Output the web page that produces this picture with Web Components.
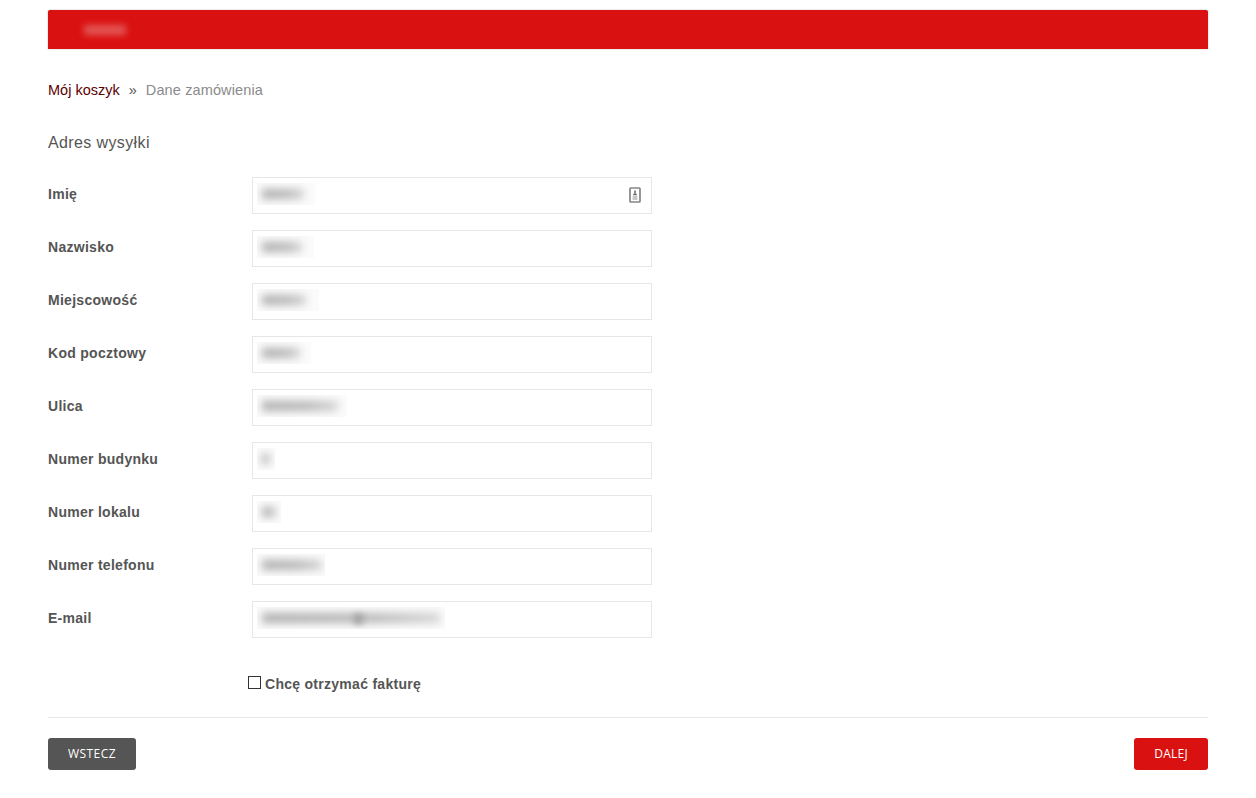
<!DOCTYPE html>
<html lang="pl"><head><meta charset="utf-8"><title>Dane zamówienia</title>
<style>html,body{margin:0;background:#fff}body{font-family:"Liberation Sans",Arial,sans-serif}</style>
</head><body>
<order-page>
  <top-bar slot="bar"></top-bar>
  <bread-crumbs slot="crumbs"></bread-crumbs>
  <section-title slot="title">Adres wysyłki</section-title>
  <form-field slot="fields" label="Imię" w="58" bar="42" icon></form-field>
  <form-field slot="fields" label="Nazwisko" w="57" bar="40"></form-field>
  <form-field slot="fields" label="Miejscowość" w="62" bar="44"></form-field>
  <form-field slot="fields" label="Kod pocztowy" w="54" bar="38"></form-field>
  <form-field slot="fields" label="Ulica" w="90" bar="76"></form-field>
  <form-field slot="fields" label="Numer budynku" w="18" bar="8"></form-field>
  <form-field slot="fields" label="Numer lokalu" w="24" bar="14"></form-field>
  <form-field slot="fields" label="Numer telefonu" w="68" bar="60"></form-field>
  <form-field slot="fields" label="E-mail" w="188" bar="178" at></form-field>
  <invoice-check slot="check">Chcę otrzymać fakturę</invoice-check>
  <action-button slot="back" kind="dark">WSTECZ</action-button>
  <action-button slot="next" kind="red">DALEJ</action-button>
</order-page>
<script>
function def(name, css, html, init){
  customElements.define(name, class extends HTMLElement{
    constructor(){super();const r=this.attachShadow({mode:'open'});r.innerHTML='<style>'+css+'</style>'+html;}
    connectedCallback(){if(init)init(this,this.shadowRoot);}
  });
}
def('order-page',`
:host{display:block;padding:10px 48px 0;box-sizing:border-box;height:798px;overflow:hidden}
.crumbs{margin-top:32px}
.title{margin-top:34px}
.fields{display:flex;flex-direction:column;gap:16px;margin-top:24px}
.check{margin-top:37px;padding-left:200px}
hr{border:0;border-top:1px solid #e6e6e6;margin:24px 0 20px}
.actions{display:flex;justify-content:space-between}
`,`
<slot name="bar"></slot>
<div class="crumbs"><slot name="crumbs"></slot></div>
<div class="title"><slot name="title"></slot></div>
<div class="fields"><slot name="fields"></slot></div>
<div class="check"><slot name="check"></slot></div>
<hr>
<div class="actions"><slot name="back"></slot><slot name="next"></slot></div>
`);
def('top-bar',`
:host{display:flex;align-items:center;height:39px;background:#d91110;border-radius:2px 2px 0 0;box-shadow:0 0 2px rgba(0,0,0,.28);padding-left:36px}
i{display:block;width:42px;height:10px;background:#e66a6a;filter:blur(3.5px);opacity:.8}
`,`<i></i>`);
def('bread-crumbs',`
:host{display:flex;font:14.5px/18px "Liberation Sans",Arial,sans-serif;color:#8a8a8a}
a{color:#5c0000;text-decoration:none}
span{color:#555;margin:0 9px}
b{font-weight:400;letter-spacing:.13px}
`,`<a href="#">Mój koszyk</a><span>»</span><b>Dane zamówienia</b>`);
def('section-title',`
:host{display:block;font:16px/20px "Liberation Sans",Arial,sans-serif;letter-spacing:.38px;color:#555}
`,`<slot></slot>`);
def('form-field',`
:host{display:grid;grid-template-columns:204px 400px;height:37px}
label{font:bold 14px/18px "Liberation Sans",Arial,sans-serif;letter-spacing:.28px;color:#555;padding-top:8px}
.box{position:relative;box-sizing:border-box;height:37px;border:1px solid #e6e6e6;background:#fff;padding:5px 4px;display:flex}
.blur{display:block;height:22px;background:#fbfbfb;overflow:hidden;position:relative}
.blur i{position:absolute;left:5px;top:6px;height:10px;background:linear-gradient(90deg,#aeaeae,#b6b6b6 60%,#d4d4d4);filter:blur(4px)}
.blur u{position:absolute;left:97px;top:7px;width:9px;height:10px;background:#a2a2a2;filter:blur(3px)}
svg{position:absolute;right:10px;top:9px}
`,`<label></label><div class="box"><span class="blur"><i></i></span></div>`,(h,r)=>{
  r.querySelector('label').textContent=h.getAttribute('label');
  r.querySelector('.blur').style.width=h.getAttribute('w')+'px';
  r.querySelector('i').style.width=h.getAttribute('bar')+'px';
  if(h.hasAttribute('at')&&!r.querySelector('u')){
    r.querySelector('.blur').insertAdjacentHTML('beforeend','<u></u>');
  }
  if(h.hasAttribute('icon')&&!r.querySelector('svg')){
    r.querySelector('.box').insertAdjacentHTML('beforeend','<svg width="12" height="16" viewBox="0 0 12 16"><rect x="1" y="1" width="10" height="14" rx=".8" fill="#fff" stroke="#858585" stroke-width="1.7"/><path d="M6 3.4v3.2M4.2 7.4h3.6" stroke="#666" stroke-width="1.5"/><path d="M3.6 10h4.8M3.6 12h4.8" stroke="#b5b5b5" stroke-width="1.3"/></svg>');
  }
});
def('invoice-check',`
:host{display:flex;align-items:center;font:bold 14px/18px "Liberation Sans",Arial,sans-serif;letter-spacing:.28px;color:#555}
i{display:block;box-sizing:border-box;width:13px;height:13px;border:1px solid #333;background:#fff;margin:-4px 4px 0 0}
`,`<i></i><slot></slot>`);
def('action-button',`
:host{display:flex;align-items:center;justify-content:center;box-sizing:border-box;height:32px;border-radius:3px;font:12px/16px "Open Sans",sans-serif;letter-spacing:.45px;color:#fff;padding:0 20px}
:host([kind=dark]){background:#555;}
:host([kind=red]){background:#d91110;letter-spacing:.25px;}
`,`<slot></slot>`);
</script>
</body></html>
